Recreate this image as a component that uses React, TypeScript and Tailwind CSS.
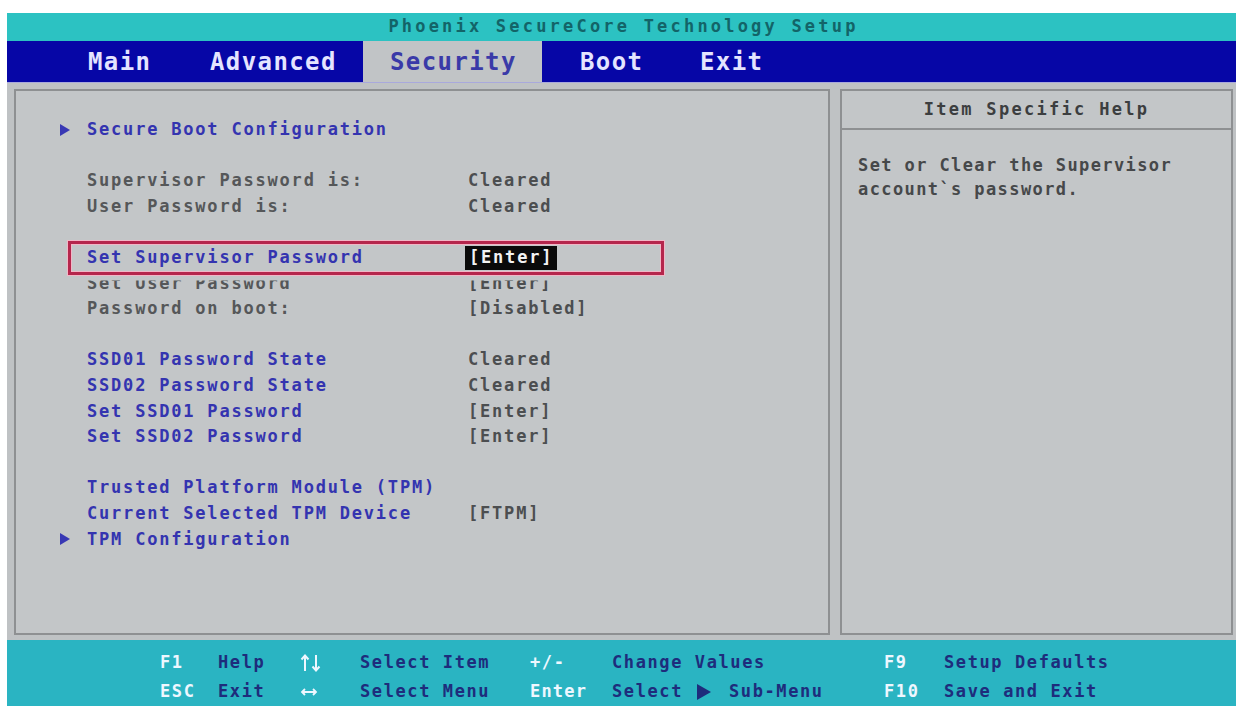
import React from "react";

const mono = "font-['DejaVu_Sans_Mono','Liberation_Mono',monospace] font-bold";

function Arrow({ className = "" }: { className?: string }) {
  return (
    <svg width="10" height="12" viewBox="0 0 10 12" className={className}>
      <polygon points="0,0 10,6 0,12" fill="#3838b4" />
    </svg>
  );
}

function UpDown() {
  return (
    <svg width="22" height="18" viewBox="0 0 22 18" fill="none" stroke="#eef7ff" strokeWidth="2">
      <path d="M5 17V2M1.5 5.5L5 1.5L8.5 5.5" />
      <path d="M16 1V16M12.5 12.5L16 16.5L19.5 12.5" />
    </svg>
  );
}

function LeftRight() {
  return (
    <svg width="18" height="10" viewBox="0 0 18 10" fill="none" stroke="#eef7ff" strokeWidth="1.8">
      <path d="M2 5H16M5 2L2 5L5 8M13 2L16 5L13 8" />
    </svg>
  );
}

type Row =
  | { blank: true }
  | {
      blank?: false;
      label: string;
      value?: string;
      blue?: boolean;
      arrow?: boolean;
      selected?: boolean;
      clipped?: boolean;
    };

const rows: Row[] = [
  { label: "Secure Boot Configuration", blue: true, arrow: true },
  { blank: true },
  { label: "Supervisor Password is:", value: "Cleared" },
  { label: "User Password is:", value: "Cleared" },
  { blank: true },
  { label: "Set Supervisor Password", value: "[Enter]", blue: true, selected: true },
  { label: "Set User Password", value: "[Enter]", clipped: true },
  { label: "Password on boot:", value: "[Disabled]" },
  { blank: true },
  { label: "SSD01 Password State", value: "Cleared", blue: true },
  { label: "SSD02 Password State", value: "Cleared", blue: true },
  { label: "Set SSD01 Password", value: "[Enter]", blue: true },
  { label: "Set SSD02 Password", value: "[Enter]", blue: true },
  { blank: true },
  { label: "Trusted Platform Module (TPM)", blue: true },
  { label: "Current Selected TPM Device", value: "[FTPM]", blue: true },
  { label: "TPM Configuration", blue: true, arrow: true },
];

function BodyRow({ r }: { r: Row }) {
  if (r.blank) return <div className="h-[25.6px]" />;
  return (
    <div
      className={`relative flex h-[25.6px] items-center text-[17px] tracking-[1.8px] ${
        r.clipped ? "[clip-path:inset(10px_0_0_0)] text-[#555759]" : ""
      }`}
    >
      <div className="flex w-[71px] shrink-0 justify-end pr-[17px]">
        {r.arrow ? <Arrow /> : null}
      </div>
      <div
        className={`w-[381px] shrink-0 whitespace-pre ${
          r.blue ? "text-[#3434b0]" : "text-[#555759]"
        }`}
      >
        {r.label}
      </div>
      {r.value ? (
        r.selected ? (
          <div className="-ml-[3px] flex h-[24px] items-center whitespace-pre bg-[#0a0a0a] pl-[4px] pr-[4px] text-[#f2f2f2]">
            {r.value}
          </div>
        ) : (
          <div className="whitespace-pre text-[#4c4e50]">{r.value}</div>
        )
      ) : null}
      {r.selected ? (
        <div className="absolute left-[52px] top-[-4px] h-[34px] w-[596px] border-[3px] border-[#b5264c] shadow-[0_0_0_1px_#f2b6c6,inset_0_0_0_1px_#f2b6c6]" />
      ) : null}
    </div>
  );
}

function FooterCell({
  w,
  text,
  keyStyle,
  extra,
}: {
  w?: string;
  text: React.ReactNode;
  keyStyle?: boolean;
  extra?: string;
}) {
  return (
    <div
      className={`${w ?? ""} ${extra ?? ""} flex shrink-0 items-center whitespace-pre ${
        keyStyle ? "text-[#eef7ff]" : "text-[#1e2c7c]"
      }`}
    >
      {text}
    </div>
  );
}

export default function App() {
  return (
    <div
      className={`flex h-[709px] w-[1242px] flex-col bg-white pb-[3px] pl-[7px] pr-[6px] pt-[13px] ${mono}`}
    >
      {/* Title bar */}
      <div className="flex h-[28px] shrink-0 items-center justify-center bg-[#2cc2c2] pl-[4px] text-[17px] tracking-[3.2px] text-[#136468]">
        Phoenix SecureCore Technology Setup
      </div>

      {/* Menu bar */}
      <div className="flex h-[42px] shrink-0 items-stretch border-b border-[#a9a9dc] bg-[#0606a6] pl-[81px] text-[24px] tracking-[1.4px] text-[#e4e4ff]">
        <div className="flex w-[122px] items-center">Main</div>
        <div className="flex w-[153px] items-center">Advanced</div>
        <div className="flex w-[179px] items-center bg-[#c1c4c6] pl-[27px] text-[#3a3aa8]">
          Security
        </div>
        <div className="ml-[38px] flex w-[120px] items-center">Boot</div>
        <div className="flex items-center">Exit</div>
      </div>

      {/* Main area */}
      <div className="flex min-h-0 flex-1 gap-[10px] bg-[#bfc2c4] pb-[5px] pl-[7px] pr-[3px] pt-[6px]">
        {/* Left panel */}
        <div className="w-[816px] shrink-0 border-2 border-[#8e9092] bg-[#c3c6c8] pt-[26px]">
          {rows.map((r, i) => (
            <BodyRow key={i} r={r} />
          ))}
        </div>

        {/* Right panel */}
        <div className="flex flex-1 flex-col border-2 border-[#8e9092] bg-[#c3c6c8]">
          <div className="flex h-[39px] shrink-0 items-center justify-center border-b-2 border-[#8e9092] text-[17px] tracking-[2.3px] text-[#3c3e40]">
            Item Specific Help
          </div>
          <div className="pl-[16px] pt-[23px] text-[17px] leading-[24px] tracking-[1.4px] text-[#46484a]">
            <div>Set or Clear the Supervisor</div>
            <div>account`s password.</div>
          </div>
        </div>
      </div>

      {/* Footer */}
      <div className="flex h-[66px] shrink-0 flex-col bg-[#2ab4c2] pl-[153px] pt-[8px] text-[17px] tracking-[1.6px]">
        <div className="flex h-[29px] items-center">
          <FooterCell w="w-[58px]" text="F1" keyStyle />
          <FooterCell w="w-[82px]" text="Help" />
          <FooterCell w="w-[60px]" text={<UpDown />} keyStyle />
          <FooterCell w="w-[170px]" text="Select Item" />
          <FooterCell w="w-[82px]" text="+/-" keyStyle />
          <FooterCell w="w-[272px]" text="Change Values" />
          <FooterCell w="w-[60px]" text="F9" keyStyle />
          <FooterCell text="Setup Defaults" />
        </div>
        <div className="flex h-[29px] items-center">
          <FooterCell w="w-[58px]" text="ESC" keyStyle />
          <FooterCell w="w-[82px]" text="Exit" />
          <FooterCell w="w-[60px]" text={<LeftRight />} keyStyle />
          <FooterCell w="w-[170px]" text="Select Menu" />
          <FooterCell w="w-[82px]" text="Enter" keyStyle extra="tracking-[1.2px]" />
          <FooterCell
            w="w-[272px]"
            text={
              <span className="flex items-center">
                Select
                <svg width="14" height="16" viewBox="0 0 14 16" className="ml-[14px] mr-[18px]">
                  <polygon points="0,0 14,8 0,16" fill="#1e2c7c" />
                </svg>
                Sub-Menu
              </span>
            }
          />
          <FooterCell w="w-[60px]" text="F10" keyStyle />
          <FooterCell text="Save and Exit" />
        </div>
      </div>
    </div>
  );
}
